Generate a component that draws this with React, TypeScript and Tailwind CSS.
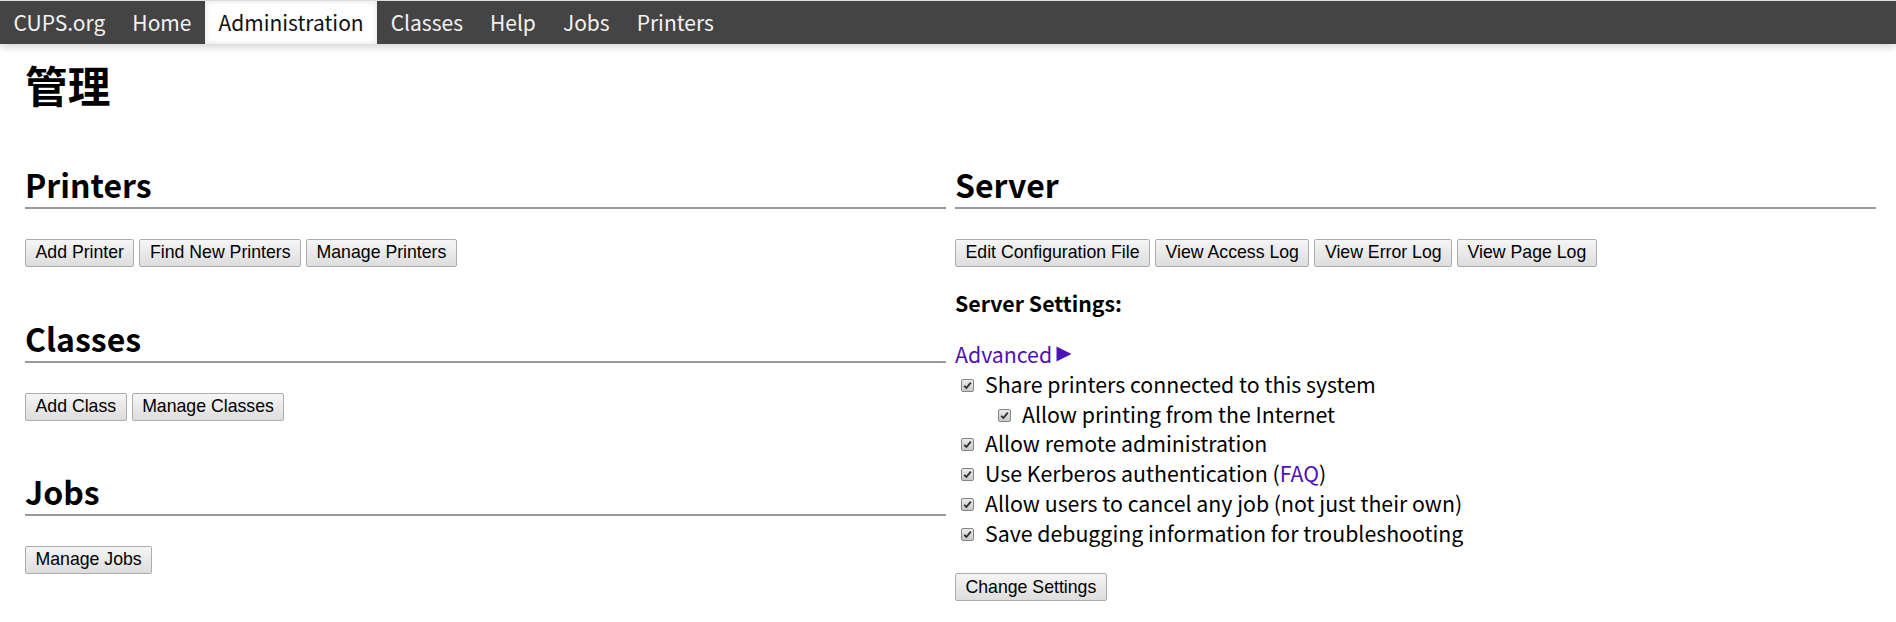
import type { ReactNode } from 'react';

const navItems = ['CUPS.org', 'Home', 'Administration', 'Classes', 'Help', 'Jobs', 'Printers'];

const settings: { label: ReactNode; indent?: boolean }[] = [
    { label: 'Share printers connected to this system' },
    { label: 'Allow printing from the Internet', indent: true },
    { label: 'Allow remote administration' },
    {
        label: (
            <>
                Use Kerberos authentication (<a className="text-[#4c12b4]">FAQ</a>)
            </>
        ),
    },
    { label: 'Allow users to cancel any job (not just their own)' },
    { label: 'Save debugging information for troubleshooting' },
];

function Button({ children }: { children: ReactNode }) {
    return (
        <button className="h-[28px] px-[9.5px] border border-[#acacac] rounded-[2px] bg-linear-to-b from-[#f5f5f5] to-[#dddddd] text-[17.7px] leading-none text-black font-['Liberation_Sans',Arial,sans-serif]">
            {children}
        </button>
    );
}

function SectionTitle({ children }: { children: ReactNode }) {
    return (
        <h2 className="text-[32px] leading-[42px] font-bold pb-[2px] border-b-2 border-[#999999]">
            {children}
        </h2>
    );
}

function CheckBox() {
    return (
        <span className="inline-flex w-[13px] h-[13px] mr-[11px] rounded-[2px] border border-[#858585] bg-linear-to-b from-[#eaeaea] to-[#c9c9c9] items-center justify-center align-[3px]">
            <svg width="9" height="9" viewBox="0 0 9 9">
                <path d="M1.2 4.8 L3.4 7 L7.8 1.6" fill="none" stroke="#2e2e2e" strokeWidth="1.8" />
            </svg>
        </span>
    );
}

export default function App() {
    return (
        <div className="min-h-[622px] bg-white text-black font-['Noto_Sans_CJK_SC','Noto_Sans',sans-serif]">
            <nav className="relative z-10 flex h-[44px] border-t border-[#dcdce4] bg-[#444444] shadow-[0_3px_8px_rgba(0,0,0,0.18)]">
                {navItems.map((item) => (
                    <a
                        key={item}
                        className={
                            item === 'Administration'
                                ? 'px-[13.5px] text-[21px] leading-[43px] bg-white text-[#111111] shadow-[inset_0_0_6px_rgba(0,0,0,0.12)]'
                                : 'px-[13.5px] text-[21px] leading-[43px] text-[#f2f2f2]'
                        }
                    >
                        {item}
                    </a>
                ))}
            </nav>

            <main className="pl-[25px] pr-[20px]">
                <h1 className="mt-[15px] text-[42.7px] leading-[50px] font-bold">管理</h1>

                <div className="mt-[54px] grid grid-cols-[921px_921px] gap-x-[9px]">
                    <div>
                        <section>
                            <SectionTitle>Printers</SectionTitle>
                            <div className="mt-[30px] flex gap-[5px]">
                                <Button>Add Printer</Button>
                                <Button>Find New Printers</Button>
                                <Button>Manage Printers</Button>
                            </div>
                        </section>
                        <section className="mt-[50px]">
                            <SectionTitle>Classes</SectionTitle>
                            <div className="mt-[30px] flex gap-[5px]">
                                <Button>Add Class</Button>
                                <Button>Manage Classes</Button>
                            </div>
                        </section>
                        <section className="mt-[49px]">
                            <SectionTitle>Jobs</SectionTitle>
                            <div className="mt-[30px] flex gap-[5px]">
                                <Button>Manage Jobs</Button>
                            </div>
                        </section>
                    </div>

                    <div>
                        <section>
                            <SectionTitle>Server</SectionTitle>
                            <div className="mt-[30px] flex gap-[5px]">
                                <Button>Edit Configuration File</Button>
                                <Button>View Access Log</Button>
                                <Button>View Error Log</Button>
                                <Button>View Page Log</Button>
                            </div>
                        </section>

                        <p className="mt-[22px] text-[21.3px] leading-[28px] font-bold">Server Settings:</p>

                        <form className="mt-[22px] text-[21.3px] leading-[29.8px]">
                            <a className="flex items-center gap-[4px] text-[#4c12b4]">
                                Advanced
                                <svg width="16" height="16" viewBox="0 0 16 16">
                                    <path d="M0.5 0.5 L15.5 8 L0.5 15.5 Z" fill="#4c12b4" />
                                </svg>
                            </a>
                            {settings.map((s, i) => (
                                <div key={i} className={s.indent ? 'pl-[43px]' : 'pl-[6px]'}>
                                    <CheckBox />
                                    {s.label}
                                </div>
                            ))}
                            <div className="mt-[21px]">
                                <Button>Change Settings</Button>
                            </div>
                        </form>
                    </div>
                </div>
            </main>
        </div>
    );
}
